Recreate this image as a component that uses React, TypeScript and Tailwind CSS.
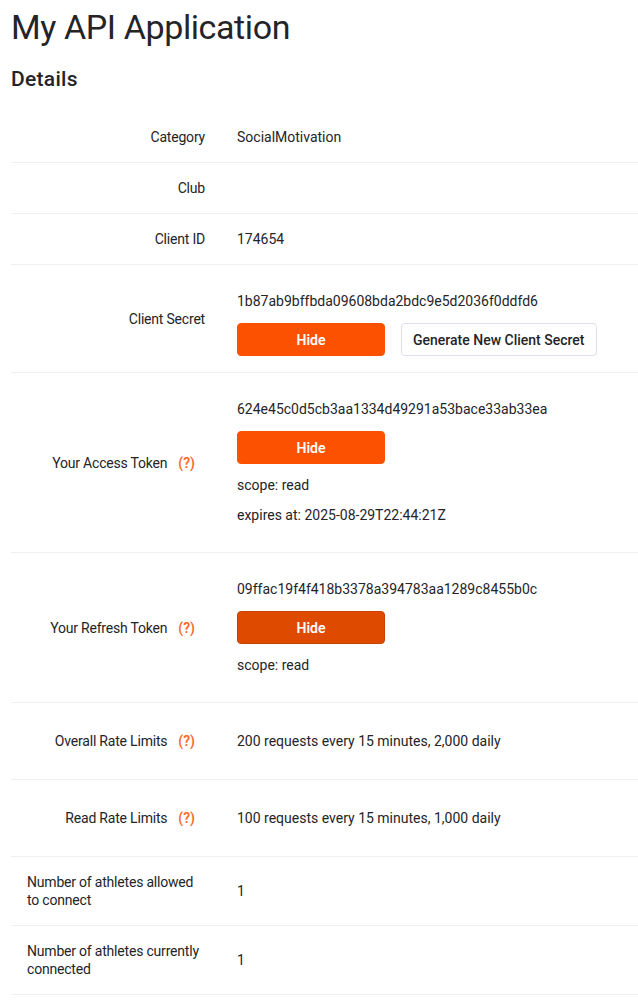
import React from 'react';

const Help: React.FC = () => (
    <span className="ml-[11px] mr-[10px] font-semibold tracking-normal text-[#fc6a26]">(?)</span>
);

const HideButton: React.FC<{pressed?: boolean}> = ({pressed}) => (
    <button
        className={
            pressed
                ? 'h-[33px] w-[148px] rounded-[4px] border border-[#c94200] bg-[#de4a00] text-[14px] font-semibold text-white'
                : 'h-[33px] w-[148px] rounded-[4px] border border-[#fc5200] bg-[#fc5200] text-[14px] font-semibold text-white'
        }
    >
        Hide
    </button>
);

interface RowProps {
    label: React.ReactNode;
    help?: boolean;
    left?: boolean;
    rowClass?: string;
    children?: React.ReactNode;
}

const Row: React.FC<RowProps> = ({label, help, left, rowClass = 'py-4', children}) => (
    <div className="flex items-center border-b border-[#f0f0f0]">
        <div
            className={
                left
                    ? 'w-[210px] shrink-0 px-4 py-4 text-left tracking-[-0.2px]'
                    : 'w-[210px] shrink-0 pr-4 text-right tracking-[-0.2px]'
            }
        >
            {label}
            {help && <Help/>}
        </div>
        <div className={'flex-1 pl-4 ' + rowClass}>{children}</div>
    </div>
);

export default function App() {
    return (
        <div
            className="min-h-screen bg-white pl-[11px] text-[14px] leading-[18px] text-[#242428]"
            style={{fontFamily: 'Roboto, "Liberation Sans", sans-serif'}}
        >
            <h1 className="pt-[7px] text-[34px] leading-[40px] tracking-[-0.4px]">My API Application</h1>
            <h2 className="mt-[20px] text-[21px] leading-[24px] font-medium tracking-[0.3px]">Details</h2>

            <div className="mt-[21px]">
                <Row label="Category">SocialMotivation</Row>
                <Row label="Club">
                    <span>&nbsp;</span>
                </Row>
                <Row label="Client ID">174654</Row>
                <Row label="Client Secret" rowClass="pt-[27px] pb-[16px]">
                    <div>1b87ab9bffbda09608bda2bdc9e5d2036f0ddfd6</div>
                    <div className="mt-[13px] flex gap-4">
                        <HideButton/>
                        <button className="h-[33px] rounded-[4px] border border-[#dfdfe8] bg-white px-[11px] text-[14px] font-medium text-[#242428]">
                            Generate New Client Secret
                        </button>
                    </div>
                </Row>
                <Row label="Your Access Token" help rowClass="pt-[27px] pb-[28px]">
                    <div>624e45c0d5cb3aa1334d49291a53bace33ab33ea</div>
                    <div className="mt-[13px]">
                        <HideButton/>
                    </div>
                    <div className="mt-[12px]">scope: read</div>
                    <div className="mt-[12px]">expires at: 2025-08-29T22:44:21Z</div>
                </Row>
                <Row label="Your Refresh Token" help rowClass="pt-[27px] pb-[28px]">
                    <div>09ffac19f4f418b3378a394783aa1289c8455b0c</div>
                    <div className="mt-[13px]">
                        <HideButton pressed/>
                    </div>
                    <div className="mt-[12px]">scope: read</div>
                </Row>
                <Row label="Overall Rate Limits" help rowClass="py-[29px]">
                    200 requests every 15 minutes, 2,000 daily
                </Row>
                <Row label="Read Rate Limits" help rowClass="py-[29px]">
                    100 requests every 15 minutes, 1,000 daily
                </Row>
                <Row label="Number of athletes allowed to connect" left>
                    1
                </Row>
                <Row label="Number of athletes currently connected" left>
                    1
                </Row>
            </div>
        </div>
    );
}
